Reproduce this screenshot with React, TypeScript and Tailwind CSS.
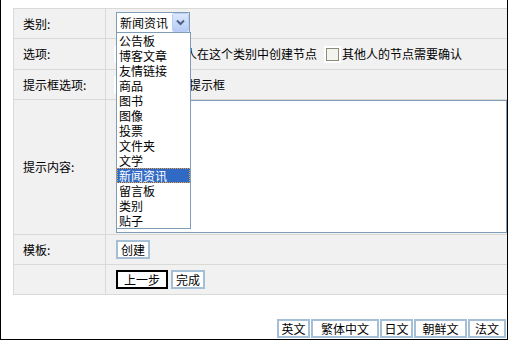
import React from 'react';

const font = { fontFamily: '"Noto Sans CJK SC", "Noto Sans", sans-serif' };

const categories = ['公告板', '博客文章', '友情链接', '商品', '图书', '图像', '投票', '文件夹', '文学', '新闻资讯', '留言板', '类别', '贴子'];
const langs: { name: string; w: string }[] = [
  { name: '英文', w: 'w-[33px]' },
  { name: '繁体中文', w: 'w-[68px]' },
  { name: '日文', w: 'w-[33px]' },
  { name: '朝鲜文', w: 'w-[53px]' },
  { name: '法文', w: 'w-[38px]' },
];

const Checkbox: React.FC = () => (
  <span className="flex items-center justify-center w-[17px] h-[17px] bg-white">
    <span className="block w-[13px] h-[13px] border border-[#8c8c7c] bg-[#f4f4ee]" />
  </span>
);

const Label: React.FC<{ text: string }> = ({ text }) => (
  <div className="w-[92px] shrink-0 border-r border-[#d9d9d6] flex items-center pl-[9px]">
    {text}
  </div>
);

const App: React.FC = () => {
  return (
    <div
      className="w-[508px] h-[340px] bg-white border-l border-r border-b border-black text-[12px] text-black leading-none"
      style={font}
    >
      <div className="pl-[12px] pt-[8px]">
        <div className="border-t border-l border-[#d9d9d6] bg-[#f1f1f1]">
          {/* 类别 */}
          <div className="flex h-[30px] border-b border-[#d9d9d6]">
            <Label text="类别:" />
            <div className="flex-1 flex items-center pl-[10px]">
              <div className="relative mt-[-2px]">
                <div className="flex items-center w-[74px] h-[21px] border border-[#7f9db9] bg-white">
                  <span className="pl-[3px] flex-1">新闻资讯</span>
                  <span className="flex items-center justify-center w-[17px] h-[19px] rounded-[2px] border border-[#b9cdf6] bg-gradient-to-b from-[#dde8fd] to-[#b6cbf6]">
                    <svg width="9" height="7" viewBox="0 0 9 7">
                      <polyline points="1,1.5 4.5,5 8,1.5" fill="none" stroke="#4d6185" strokeWidth="2" />
                    </svg>
                  </span>
                </div>
                {/* open dropdown list */}
                <div className="absolute left-0 top-[20px] z-10 w-[75px] border border-[#7f9db9] bg-white">
                  {categories.map((c) => (
                    <div
                      key={c}
                      className={`h-[15px] flex items-center pl-[2px] ${c === '新闻资讯' ? 'bg-[#316ac5] text-white outline outline-1 outline-dotted outline-[#e8a040] -outline-offset-1' : ''}`}
                    >
                      {c}
                    </div>
                  ))}
                </div>
              </div>
            </div>
          </div>

          {/* 选项 */}
          <div className="flex h-[31px] border-b border-[#d9d9d6]">
            <Label text="选项:" />
            <div className="flex-1 flex items-center pl-[8px]">
              <Checkbox />
              <span className="ml-[6px]">允许其他人在这个类别中创建节点</span>
              <span className="ml-[7px]"><Checkbox /></span>
              <span className="ml-[1px]">其他人的节点需要确认</span>
            </div>
          </div>

          {/* 提示框选项 */}
          <div className="flex h-[30px] border-b border-[#d9d9d6]">
            <Label text="提示框选项:" />
            <div className="flex-1 flex items-center pl-[8px]">
              <Checkbox />
              <span className="ml-[10px]">允许显示提示框</span>
            </div>
          </div>

          {/* 提示内容 */}
          <div className="flex h-[135px] border-b border-[#d9d9d6]">
            <Label text="提示内容:" />
            <div className="flex-1 pl-[10px]">
              <textarea
                readOnly
                className="block w-full h-[133px] border border-[#7f9db9] bg-white resize-none outline-none"
              />
            </div>
          </div>

          {/* 模板 */}
          <div className="flex h-[30px] border-b border-[#d9d9d6]">
            <Label text="模板:" />
            <div className="flex-1 flex items-center pl-[10px]">
              <button className="w-[34px] h-[19px] border-2 border-[#a4bfd6] bg-white flex items-center justify-center">
                创建
              </button>
            </div>
          </div>

          {/* 按钮 */}
          <div className="flex h-[30px] border-b border-[#d9d9d6]">
            <div className="w-[92px] shrink-0 border-r border-[#d9d9d6]" />
            <div className="flex-1 flex items-center pl-[10px] gap-[3px]">
              <button className="w-[52px] h-[19px] border-2 border-black bg-white flex items-center justify-center">
                上一步
              </button>
              <button className="w-[34px] h-[19px] border-2 border-[#a4bfd6] bg-white flex items-center justify-center">
                完成
              </button>
            </div>
          </div>
        </div>
      </div>

      {/* language switch */}
      <div className="flex justify-end gap-[1px] pr-[1px] mt-[24px]">
        {langs.map((l) => (
          <button
            key={l.name}
            className={`${l.w} h-[19px] border-2 border-[#a4bfd6] bg-white flex items-center justify-center`}
          >
            {l.name}
          </button>
        ))}
      </div>
    </div>
  );
};

export default App;
